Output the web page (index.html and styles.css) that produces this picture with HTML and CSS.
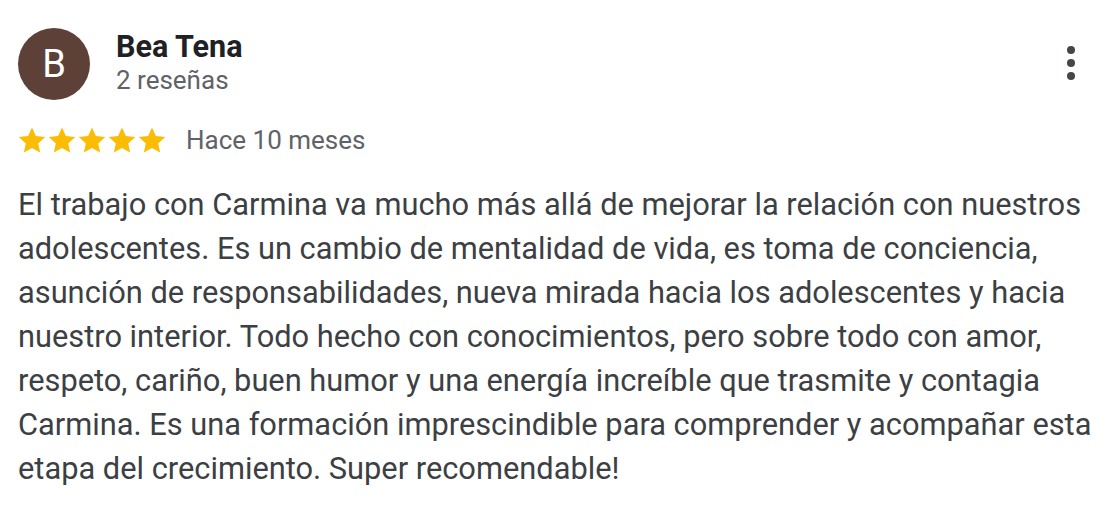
FILE: index.html
```html
<!DOCTYPE html>
<html lang="es">
<head>
<meta charset="utf-8">
<link rel="stylesheet" href="styles.css">
</head>
<body>
<div class="review">
  <div class="header">
    <div class="avatar">B</div>
    <div class="who">
      <div class="name">Bea Tena</div>
      <div class="count">2 reseñas</div>
    </div>
    <div class="menu">
      <svg width="10" height="36" viewBox="0 0 10 36"><circle cx="5" cy="5" r="4" fill="#444746"/><circle cx="5" cy="18" r="4" fill="#444746"/><circle cx="5" cy="31" r="4" fill="#444746"/></svg>
    </div>
  </div>
  <div class="rating">
    <div class="stars">
      <svg width="150" height="28" viewBox="0 0 150 28">
        <defs><path id="s" d="M14 1.5l3.9 8.6 9.3 1-7 6.3 2 9.2L14 21.9l-8.2 4.7 2-9.2-7-6.3 9.3-1z"/></defs>
        <use href="#s" x="0" fill="#fbbc04"/>
        <use href="#s" x="30" fill="#fbbc04"/>
        <use href="#s" x="60" fill="#fbbc04"/>
        <use href="#s" x="90" fill="#fbbc04"/>
        <use href="#s" x="120" fill="#fbbc04"/>
      </svg>
    </div>
    <span class="date">Hace 10 meses</span>
  </div>
  <p class="text">El trabajo con Carmina va mucho más allá de mejorar la relación con nuestros adolescentes. Es un cambio de mentalidad de vida, es toma de conciencia, asunción de responsabilidades, nueva mirada hacia los adolescentes y hacia nuestro interior. Todo hecho con conocimientos, pero sobre todo con amor, respeto, cariño, buen humor y una energía increíble que trasmite y contagia Carmina. Es una formación imprescindible para comprender y acompañar esta etapa del crecimiento. Super recomendable!</p>
</div>
</body>
</html>
```
FILE: styles.css
```css
html, body { margin: 0; padding: 0; background: #fff; }
body { font-family: Roboto, "Noto Sans", sans-serif; }
.review { padding: 28px 8px 0 18px; width: 1090px; }
.header { display: flex; align-items: flex-start; }
.avatar {
  width: 72px; height: 72px; border-radius: 50%;
  background: #5d4037; color: #fff;
  display: flex; align-items: center; justify-content: center;
  font-size: 38px; flex: none;
}
.who { margin-left: 26px; flex: 1; }
.name { font-size: 30.5px; font-weight: 700; color: #202124; line-height: 36px; margin-top: 1px; }
.count { font-size: 26px; color: #5f6368; line-height: 34px; margin-top: -2px; }
.menu { margin-top: 17px; margin-right: 32px; }
.menu svg { display: block; }
.rating { display: flex; align-items: center; margin-top: 25px; height: 30px; }
.stars svg { display: block; }
.date { margin-left: 18px; font-size: 26px; color: #5f6368; }
.text { margin: 28px 0 0 0; font-size: 30.8px; line-height: 44px; color: #3c4043; }
```
